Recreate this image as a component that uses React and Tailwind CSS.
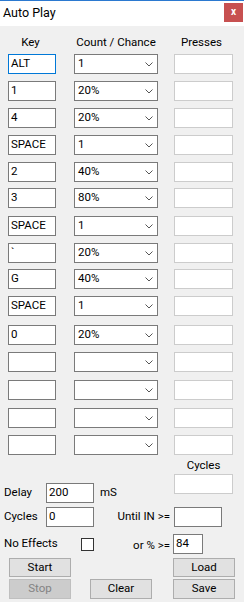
import React from 'react';

const rows = [
  { key: 'ALT', count: '1', mt: 'mt-0', focus: true },
  { key: '1', count: '20%', mt: 'mt-[7px]' },
  { key: '4', count: '20%', mt: 'mt-[7px]' },
  { key: 'SPACE', count: '1', mt: 'mt-[7px]' },
  { key: '2', count: '40%', mt: 'mt-[7px]' },
  { key: '3', count: '80%', mt: 'mt-[6px]' },
  { key: 'SPACE', count: '1', mt: 'mt-[8px]' },
  { key: '`', count: '20%', mt: 'mt-[7px]' },
  { key: 'G', count: '40%', mt: 'mt-[6px]' },
  { key: 'SPACE', count: '1', mt: 'mt-[7px]' },
  { key: '0', count: '20%', mt: 'mt-[9px]' },
  { key: '', count: '', mt: 'mt-[7px]' },
  { key: '', count: '', mt: 'mt-[8px]' },
  { key: '', count: '', mt: 'mt-[8px]' },
  { key: '', count: '', mt: 'mt-[7px]' },
];

function Chevron() {
  return (
    <svg width="8" height="5" viewBox="0 0 8 5" className="ml-auto mr-[4px]">
      <path d="M0.5 0.5 L4 4 L7.5 0.5" fill="none" stroke="#555" strokeWidth="1" />
    </svg>
  );
}

function TextBox({ value, className = '' }) {
  return (
    <div className={`h-[20px] bg-white border flex items-center pl-[2px] leading-none ${className}`}>
      {value}
    </div>
  );
}

function Button({ label, disabled, className = '' }) {
  return (
    <div
      className={`w-[62px] flex items-center justify-center border ${
        disabled ? 'bg-[#cccccc] border-[#bfbfbf] text-[#838383]' : 'bg-[#e1e1e1] border-[#adadad] text-black'
      } ${className}`}
    >
      {label}
    </div>
  );
}

export default function App() {
  return (
    <div className="w-[244px] h-[602px] bg-[#f0f0f0] text-black text-[11.5px] overflow-hidden" style={{ fontFamily: 'Roboto, "Liberation Sans", sans-serif' }}>
      {/* title bar */}
      <div className="border-t border-[#2b79d0] h-[26px] bg-white flex items-start">
        <span className="pl-[3px] pt-[5px] text-[12.5px] leading-[14px]">Auto Play</span>
        <div className="ml-auto mr-[1px] mt-[2px] w-[19px] h-[19px] bg-[#c75050] text-white flex items-center justify-center font-bold text-[10px] leading-none pb-[2px]">
          x
        </div>
      </div>

      {/* headers */}
      <div className="flex pl-[8px] h-[28px] pt-[8px] leading-[16px]">
        <div className="w-[48px] text-center pr-[3px]">Key</div>
        <div className="w-[84px] ml-[18px] text-center">Count / Chance</div>
        <div className="w-[59px] ml-[16px] text-center pr-[4px]">Presses</div>
      </div>

      {/* rows */}
      <div className="flex flex-col pl-[8px]">
        {rows.map((r, i) => (
          <div key={i} className={`flex h-[20px] ${r.mt}`}>
            <TextBox
              value={r.key}
              className={`w-[48px] ${r.focus ? 'border-[#0078d7]' : 'border-[#7a7a7a]'}`}
            />
            <div className="w-[84px] ml-[18px] h-[20px] bg-white border border-[#7a7a7a] flex items-center pl-[3px] leading-none">
              <span>{r.count}</span>
              <Chevron />
            </div>
            <div className="w-[59px] ml-[16px] h-[20px] bg-white border border-[#cccccc]" />
          </div>
        ))}
      </div>

      {/* lower controls */}
      <div className="flex">
        <div className="w-[170px] pl-[4px] flex flex-col">
          <div className="mt-[28px] h-[20px] flex items-center">
            <span className="w-[42px]">Delay</span>
            <TextBox value="200" className="w-[48px] border-[#7a7a7a]" />
            <span className="ml-[6px]">mS</span>
          </div>
          <div className="mt-[4px] h-[20px] flex items-center">
            <span className="w-[42px]">Cycles</span>
            <TextBox value="0" className="w-[48px] border-[#7a7a7a]" />
            <span className="ml-auto">Until IN &gt;=</span>
          </div>
          <div className="mt-[7px] h-[20px] flex items-center">
            <span className="w-[77px]">No Effects</span>
            <div className="w-[13px] h-[13px] border border-[#333333] bg-white" />
            <span className="ml-auto pt-[3px]">or % &gt;=</span>
          </div>
          <Button label="Start" className="mt-[4px] ml-[5px] h-[19px]" />
          <div className="mt-[2px] flex">
            <Button label="Stop" disabled className="ml-[5px] h-[20px]" />
            <Button label="Clear" className="ml-[19px] h-[20px]" />
          </div>
        </div>

        <div className="flex flex-col">
          <div className="h-[19px] pl-[4px] w-[63px] text-center leading-[19px] pt-[1px]">Cycles</div>
          <div className="ml-[4px] w-[59px] h-[20px] bg-white border border-[#cccccc]" />
          <div className="mt-[13px] ml-[4px] w-[48px] h-[20px] bg-white border border-[#7a7a7a]" />
          <TextBox value="84" className="mt-[7px] ml-[3px] w-[30px] border-[#7a7a7a]" />
          <Button label="Load" className="mt-[4px] ml-[3px] h-[19px]" />
          <Button label="Save" className="mt-[2px] ml-[3px] h-[20px]" />
        </div>
      </div>
    </div>
  );
}
